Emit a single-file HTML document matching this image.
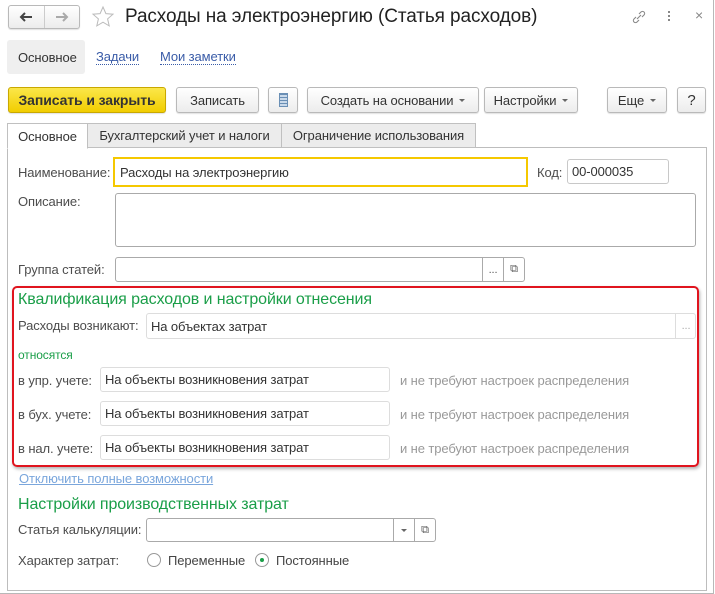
<!DOCTYPE html>
<html><head><meta charset="utf-8">
<style>
*{box-sizing:border-box;margin:0;padding:0}
body{width:715px;height:594px;background:#fff;font-family:"Liberation Sans",Arial,sans-serif;font-size:13px;color:#404040;position:relative;overflow:hidden;letter-spacing:-0.1px}
.a{position:absolute}
.btn{position:absolute;border:1px solid #b9b9b9;border-radius:3px;background:linear-gradient(#fff,#ececec);display:flex;align-items:center;justify-content:center;color:#333;font-size:13px;box-shadow:0 1px 1px rgba(0,0,0,.12)}
.inp{position:absolute;border:1px solid #c8c8c8;border-radius:3px;background:#fff;color:#333;padding-left:4px;display:flex;align-items:center;font-size:13px}
.lbl{position:absolute;color:#4d4d4d;font-size:13px;line-height:16px}
.tab{position:absolute;top:123px;height:25px;border:1px solid #c0c0c0;background:#ececec;display:flex;align-items:center;justify-content:center;font-size:13px;color:#333}
.grn{position:absolute;color:#1a9e48;font-size:16px}
.gr{position:absolute;color:#999;font-size:13px}
.caret{display:inline-block;width:0;height:0;border-left:3px solid transparent;border-right:3px solid transparent;border-top:3px solid #666;margin-left:6px;vertical-align:middle}
.sub{position:absolute;top:0;bottom:0;border-left:1px solid #c8c8c8;display:flex;align-items:center;justify-content:center;color:#555;font-size:11px}
.rad{position:absolute;width:14px;height:14px;border:1px solid #999;border-radius:50%;background:#fff}
</style></head><body>
<div class="a" style="left:0;top:0;width:714px;height:594px;border-right:1px solid #b8b8b8;border-bottom:1px solid #b8b8b8"></div>
<!-- nav -->
<div class="btn" style="left:8px;top:5px;width:72px;height:24px;padding:0">
<div style="flex:1;display:flex;justify-content:center"><svg width="14" height="10" viewBox="0 0 14 10"><path d="M13 5H3M6 1L2 5l4 4" fill="none" stroke="#444" stroke-width="2"/></svg></div><div style="width:1px;height:22px;background:#ccc"></div><div style="flex:1;display:flex;justify-content:center"><svg width="14" height="10" viewBox="0 0 14 10"><path d="M1 5h10M8 1l4 4-4 4" fill="none" stroke="#aaa" stroke-width="2"/></svg></div></div>
<svg class="a" style="left:91px;top:5px" width="24" height="24" viewBox="0 0 24 24"><path d="M12 2l2.9 6.6 7.1.6-5.4 4.7 1.6 7-6.2-3.7-6.2 3.7 1.6-7L2 9.2l7.1-.6z" fill="none" stroke="#bbb" stroke-width="1"/></svg>
<div class="a" style="left:125px;top:6px;font-size:19px;color:#222">Расходы на электроэнергию (Статья расходов)</div>
<svg class="a" style="left:631px;top:9px" width="16" height="16" viewBox="0 0 16 16"><path d="M6 10l4-4M5 8l-2 2a2 2 0 003 3l2-2M11 8l2-2a2 2 0 00-3-3L8 5" fill="none" stroke="#888" stroke-width="1.1"/></svg>
<div class="a" style="left:668px;top:11px;width:2px;height:2px;background:#888;box-shadow:0 4px #888,0 8px #888"></div>
<div class="a" style="left:695px;top:7px;font-size:14px;color:#888">×</div>
<!-- top tabs -->
<div class="a" style="left:7px;top:40px;width:78px;height:34px;background:#efefef;border-radius:3px"></div>
<div class="a" style="left:18px;top:50px;color:#333">Основное</div>
<div class="a" style="left:96px;top:50px;color:#3a5ca8;border-bottom:1px dotted #3a5ca8;line-height:14px">Задачи</div>
<div class="a" style="left:160px;top:50px;color:#3a5ca8;border-bottom:1px dotted #3a5ca8;line-height:14px">Мои заметки</div>
<!-- toolbar -->
<div class="btn" style="left:8px;top:87px;width:158px;height:26px;background:linear-gradient(#fbe74a,#f1cd00);border-color:#c9a800;font-weight:bold;color:#333;font-size:14px">Записать и закрыть</div>
<div class="btn" style="left:176px;top:87px;width:83px;height:26px">Записать</div>
<div class="btn" style="left:268px;top:87px;width:30px;height:26px"><div style="width:9px;height:14px;background:repeating-linear-gradient(#6a8fb5 0 1px,#c9d9ea 1px 3px);border:1px solid #6a8fb5"></div></div>
<div class="btn" style="left:307px;top:87px;width:172px;height:26px">Создать на основании<span class="caret"></span></div>
<div class="btn" style="left:484px;top:87px;width:94px;height:26px">Настройки<span class="caret"></span></div>
<div class="btn" style="left:607px;top:87px;width:60px;height:26px">Еще<span class="caret"></span></div>
<div class="btn" style="left:677px;top:87px;width:29px;height:26px;font-size:15px">?</div>
<!-- tabs -->
<div class="a" style="left:7px;top:147px;width:700px;height:444px;border:1px solid #bdbdbd"></div>
<div class="tab" style="left:7px;width:81px;background:#fff;border-bottom:1px solid #fff;height:26px">Основное</div>
<div class="tab" style="left:87px;width:195px">Бухгалтерский учет и налоги</div>
<div class="tab" style="left:281px;width:195px">Ограничение использования</div>
<!-- fields -->
<div class="lbl" style="left:18px;top:165px">Наименование:</div>
<div class="inp" style="left:113px;top:157px;width:415px;height:30px;border:2px solid #f5c800;border-radius:0;padding-left:5px">Расходы на электроэнергию</div>
<div class="lbl" style="left:537px;top:165px">Код:</div>
<div class="inp" style="left:567px;top:159px;width:102px;height:25px">00-000035</div>
<div class="lbl" style="left:18px;top:194px">Описание:</div>
<div class="inp" style="left:115px;top:193px;width:581px;height:54px;border-color:#aaa"></div>
<div class="lbl" style="left:18px;top:262px">Группа статей:</div>
<div class="inp" style="left:115px;top:257px;width:410px;height:25px;border-color:#aaa"><div class="sub" style="left:366px;width:21px;border-color:#aaa">...</div><div class="sub" style="left:387px;width:21px;border-color:#aaa">⧉</div></div>
<!-- red box -->
<div class="a" style="left:12px;top:286px;width:687px;height:181px;border:2px solid #e0141e;border-radius:5px;box-shadow:1px 2px 3px rgba(0,0,0,.3)"></div>
<div class="grn" style="left:18px;top:291px">Квалификация расходов и настройки отнесения</div>
<div class="lbl" style="left:18px;top:318px">Расходы возникают:</div>
<div class="inp" style="left:146px;top:313px;width:550px;height:26px;border-color:#ddd">На объектах затрат<div class="sub" style="left:528px;width:21px;border-color:#ddd;color:#aaa">...</div></div>
<div class="a" style="left:18px;top:348px;color:#1a9e48;font-size:12px">относятся</div>
<div class="lbl" style="left:18px;top:373px">в упр. учете:</div>
<div class="inp" style="left:100px;top:367px;width:290px;height:25px;border-color:#ddd">На объекты возникновения затрат</div>
<div class="gr" style="left:400px;top:373px">и не требуют настроек распределения</div>
<div class="lbl" style="left:18px;top:407px">в бух. учете:</div>
<div class="inp" style="left:100px;top:401px;width:290px;height:25px;border-color:#ddd">На объекты возникновения затрат</div>
<div class="gr" style="left:400px;top:407px">и не требуют настроек распределения</div>
<div class="lbl" style="left:18px;top:441px">в нал. учете:</div>
<div class="inp" style="left:100px;top:435px;width:290px;height:25px;border-color:#ddd">На объекты возникновения затрат</div>
<div class="gr" style="left:400px;top:441px">и не требуют настроек распределения</div>
<div class="a" style="left:19px;top:471px;color:#7aa6dc;text-decoration:underline;font-size:13px">Отключить полные возможности</div>
<div class="grn" style="left:18px;top:496px">Настройки производственных затрат</div>
<div class="lbl" style="left:18px;top:522px">Статья калькуляции:</div>
<div class="inp" style="left:146px;top:518px;width:290px;height:24px;border-color:#aaa"><div class="sub" style="left:246px;width:21px;border-color:#aaa"><span class="caret" style="margin:0"></span></div><div class="sub" style="left:267px;width:21px;border-color:#aaa">⧉</div></div>
<div class="lbl" style="left:18px;top:553px">Характер затрат:</div>
<div class="rad" style="left:147px;top:553px"></div>
<div class="lbl" style="left:168px;top:553px;color:#444">Переменные</div>
<div class="rad" style="left:255px;top:553px"><div style="position:absolute;left:4px;top:4px;width:4px;height:4px;border-radius:50%;background:#1a9e48"></div></div>
<div class="lbl" style="left:276px;top:553px;color:#444">Постоянные</div>
</body></html>
